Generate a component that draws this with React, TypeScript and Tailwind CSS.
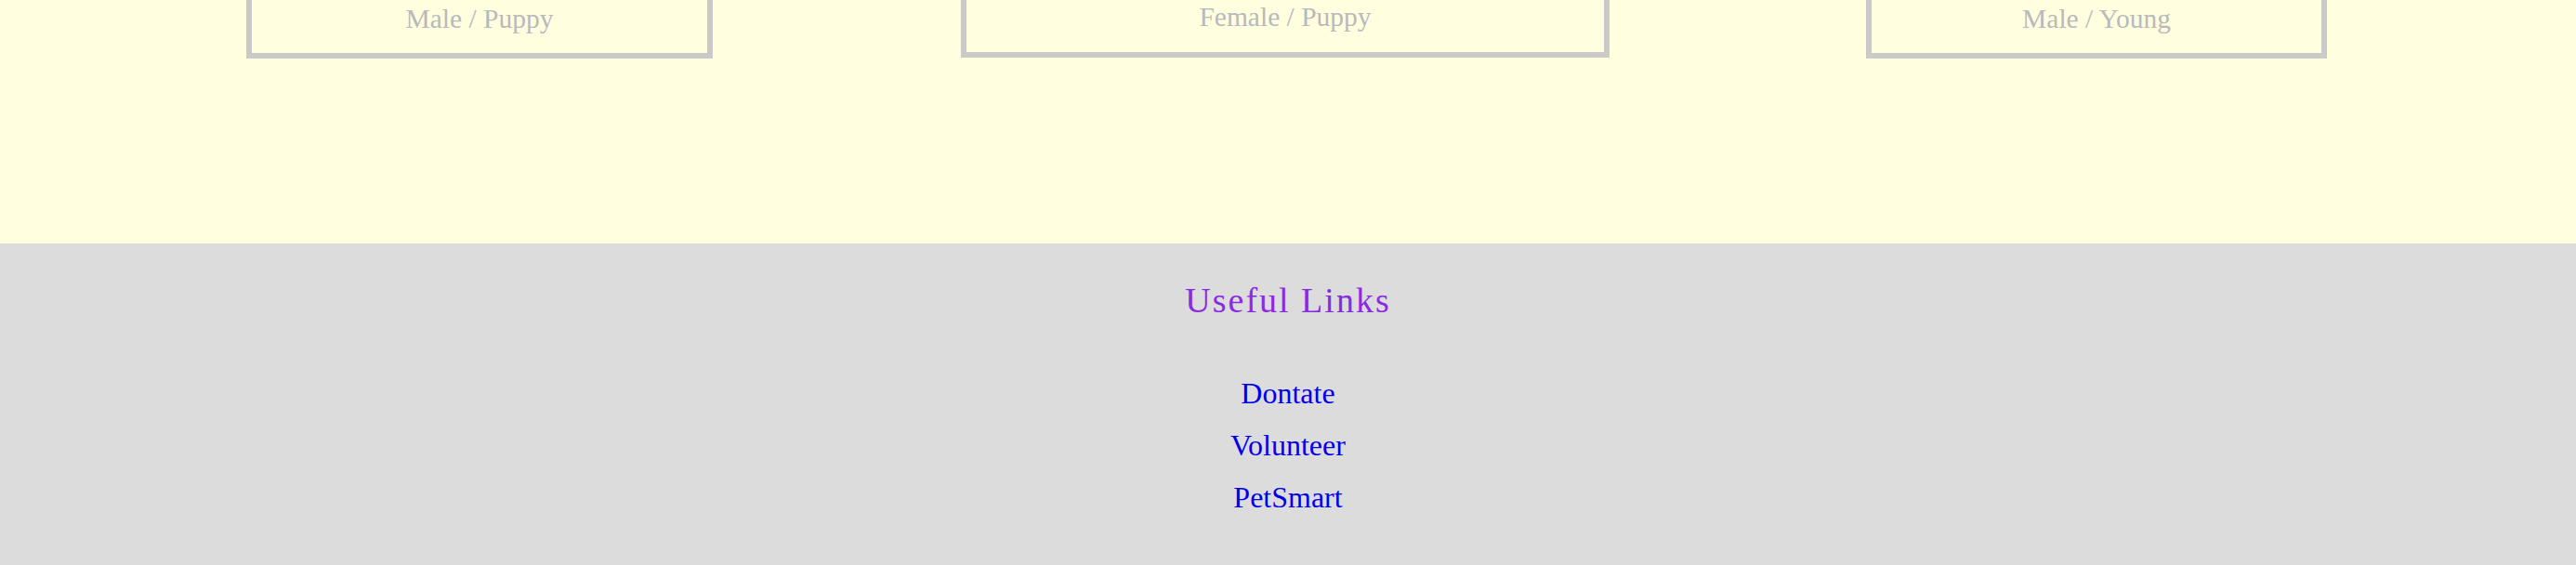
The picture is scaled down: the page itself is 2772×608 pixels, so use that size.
import React from "react";

const serif = { fontFamily: '"Liberation Serif", "Times New Roman", serif' };

export default function App() {
  return (
    <div className="w-[2772px] h-[608px] flex flex-col overflow-hidden" style={serif}>
      <section className="h-[262px] bg-[#ffffe0] flex items-start pl-[265px]">
        <div className="w-[502px] h-[63px] pt-[5px] shrink-0 border-[6px] border-t-0 border-[#cacaca] text-center">
          <p className="text-[29.5px] leading-[30px] text-[#b9b9bc]">Male / Puppy</p>
        </div>
        <div className="ml-[267px] w-[698px] h-[62px] pt-[3px] shrink-0 border-[6px] border-t-0 border-[#cacaca] text-center">
          <p className="text-[29.5px] leading-[30px] text-[#b9b9bc]">Female / Puppy</p>
        </div>
        <div className="ml-[276px] w-[496px] h-[63px] pt-[5px] shrink-0 border-[6px] border-t-0 border-[#cacaca] text-center">
          <p className="text-[29.5px] leading-[30px] text-[#b9b9bc]">Male / Young</p>
        </div>
      </section>
      <footer className="flex-1 bg-[#dcdcdc] pt-[42px] text-center">
        <h2 className="text-[38px] leading-[38px] tracking-[2px] text-[#8a2be2]">Useful Links</h2>
        <ul className="mt-[53px] flex flex-col items-center">
          <li className="text-[32px] leading-[56px]"><a className="text-[#0000ee]" href="#">Dontate</a></li>
          <li className="text-[32px] leading-[56px]"><a className="text-[#0000ee]" href="#">Volunteer</a></li>
          <li className="text-[32px] leading-[56px]"><a className="text-[#0000ee]" href="#">PetSmart</a></li>
        </ul>
      </footer>
    </div>
  );
}
